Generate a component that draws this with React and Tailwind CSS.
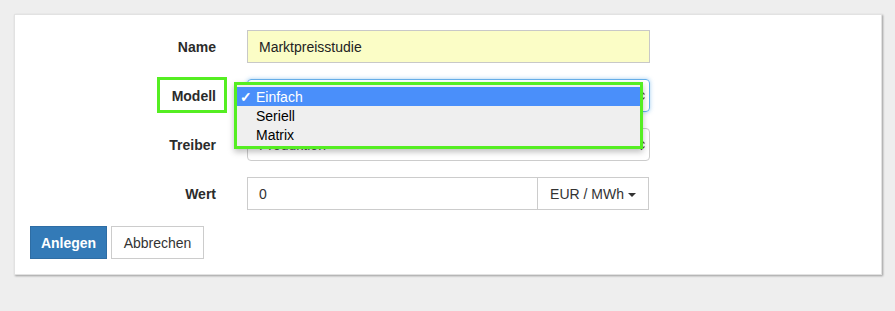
function SelectArrows() {
  return (
    <svg width="7" height="11" viewBox="0 0 7 11" className="absolute right-[4px] top-1/2 -translate-y-1/2">
      <path d="M0.5 4 L3.5 1 L6.5 4" fill="none" stroke="#555" strokeWidth="1.2" />
      <path d="M0.5 7 L3.5 10 L6.5 7" fill="none" stroke="#555" strokeWidth="1.2" />
    </svg>
  )
}

function Row({ label, children, highlight }) {
  return (
    <div className="flex items-center h-[33px]">
      <div className="relative w-[186px] text-right font-bold text-[#2b2b2b] pt-[2px]">
        {label}
        {highlight && (
          <div className="absolute left-[127px] top-[-7px] w-[70px] h-[36px] border-[3px] border-[#55ee22]" />
        )}
      </div>
      <div className="ml-[31px] relative">{children}</div>
    </div>
  )
}

export default function App() {
  const options = ['Einfach', 'Seriell', 'Matrix']
  return (
    <div className="min-h-screen bg-[#eeeeee] pt-[14px] pl-[14px]" style={{ fontFamily: '"Liberation Sans", Arial, sans-serif' }}>
      <div className="w-[868px] h-[261px] bg-white border border-[#e2e2e2] shadow-[1px_1px_2px_rgba(0,0,0,0.35)] px-[15px] pt-[15px] text-[14px] flex flex-col gap-[16px]">
        <Row label="Name">
          <div className="w-[403px] h-[33px] bg-[#fbfdc6] border border-[#c8c8c8] flex items-center px-[11px] pt-[2px] text-[#222]">
            Marktpreisstudie
          </div>
        </Row>

        <Row label="Modell" highlight>
          <div className="relative w-[403px] h-[33px] rounded-[4px] border border-[#66afe9] shadow-[0_0_4px_rgba(102,175,233,0.6)]">
            <SelectArrows />
          </div>
          {/* aufgeklapptes Menü */}
          <div className="absolute left-[-13px] top-[3px] w-[409px] h-[67px] border-[3px] border-[#55ee22] bg-[#efefef] shadow-[0_3px_6px_rgba(0,0,0,0.25)] z-10 pt-[2px]">
            {options.map((o, i) => (
              <div
                key={o}
                className={`relative h-[19px] flex items-center pl-[19px] leading-none ${i === 0 ? 'bg-[#4a8ffa] text-white' : 'text-black'}`}
              >
                {i === 0 && <span className="absolute left-[3px] top-[3px] text-[14px] font-bold">✓</span>}
                {o}
              </div>
            ))}
          </div>
        </Row>

        <Row label="Treiber">
          <div className="relative w-[403px] h-[33px] rounded-[4px] border border-[#cccccc] flex items-center px-[11px] pt-[2px] text-[#555]">
            Produktion
            <SelectArrows />
          </div>
        </Row>

        <Row label="Wert">
          <div className="flex w-[402px] h-[33px] border border-[#cccccc]">
            <div className="flex-1 flex items-center px-[11px] pt-[2px] text-[#333]">0</div>
            <div className="w-[111px] border-l border-[#cccccc] flex items-center justify-center gap-[4px] pt-[2px] text-[#333]">
              EUR / MWh
              <svg width="8" height="4" viewBox="0 0 8 4"><path d="M0 0 L8 0 L4 4 Z" fill="#333" /></svg>
            </div>
          </div>
        </Row>

        <div className="flex gap-[4px]">
          <button className="w-[77px] h-[33px] bg-[#337ab7] border border-[#2e6da4] text-white font-bold pt-[2px]">Anlegen</button>
          <button className="w-[93px] h-[33px] bg-white border border-[#cccccc] text-[#333] pt-[2px]">Abbrechen</button>
        </div>
      </div>
    </div>
  )
}
